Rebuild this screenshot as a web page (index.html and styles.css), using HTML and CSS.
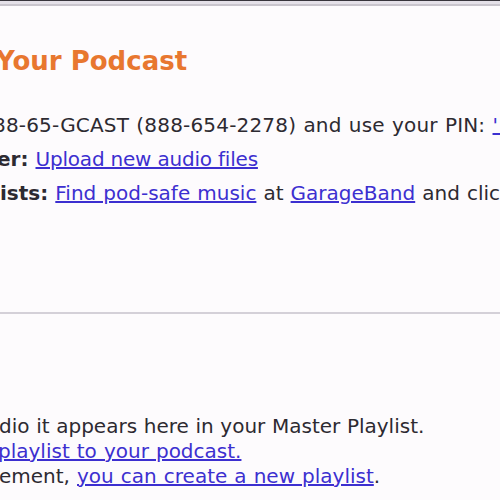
FILE: index.html
```html
<!DOCTYPE html>
<html>
<head>
<meta charset="utf-8">
<link rel="stylesheet" href="styles.css">
</head>
<body>
<div class="topbar"></div>
<main class="page">
  <h1 class="title">Your Podcast</h1>
  <ul class="ways">
    <li class="way way-phone">88-65-GCAST (888-654-2278) and use your PIN: <a href="#">'1234'</a></li>
    <li class="way way-web"><b>er:</b> <a href="#">Upload new audio files</a></li>
    <li class="way way-music"><b>ists:</b> <a href="#">Find pod-safe music</a> at <a href="#">GarageBand</a> and click the podcast button</li>
  </ul>
  <hr class="divider">
  <div class="playlist-note">
    <p class="note note-1">dio it appears here in your Master Playlist.</p>
    <p class="note note-2"><a href="#">playlist to your podcast.</a></p>
    <p class="note note-3">ement, <a href="#">you can create a new playlist</a>.</p>
  </div>
</main>
</body>
</html>
```
FILE: styles.css
```css
html, body {
  margin: 0;
  padding: 0;
}
body {
  background: #fdfbfd;
  color: #2d2a31;
  font-family: "DejaVu Sans", Verdana, sans-serif;
  font-size: 20px;
  word-spacing: 0.7px;
  overflow: hidden;
  width: 500px;
  height: 500px;
}
.topbar {
  height: 3px;
  border-top: 1px solid #38353c;
  border-bottom: 2px solid #c9c5cd;
  background: #e4e0e8;
}
.page {
  display: flex;
  flex-direction: column;
}
.title {
  margin: 39px 0 0 -4px;
  font-size: 26px;
  line-height: 32px;
  font-weight: bold;
  color: #e8772f;
  white-space: nowrap;
  word-spacing: 0;
}
.ways {
  list-style: none;
  margin: 31px 0 0 0;
  padding: 0;
}
.way {
  line-height: 34px;
  white-space: nowrap;
}
.way b {
  font-weight: bold;
}
.way-phone {
  margin-left: -7px;
  letter-spacing: 0.18px;
}
.way-web { margin-left: -3px; }
.way-web a {
  letter-spacing: -0.2px;
  word-spacing: 0;
}
.way-music { margin-left: 0; }
a {
  color: #3c2fd0;
  text-decoration: underline;
}
.divider {
  margin: 102px 0 0 0;
  height: 2px;
  border: 0;
  background: #d4d0d8;
}
.playlist-note {
  margin-top: 100px;
}
.note {
  margin: 0;
  line-height: 25px;
  white-space: nowrap;
}
.note-1 {
  margin-left: -1px;
  word-spacing: 0.3px;
}
.note-2 { margin-left: -2px; }
.note-3 { margin-left: -1px; }
```
